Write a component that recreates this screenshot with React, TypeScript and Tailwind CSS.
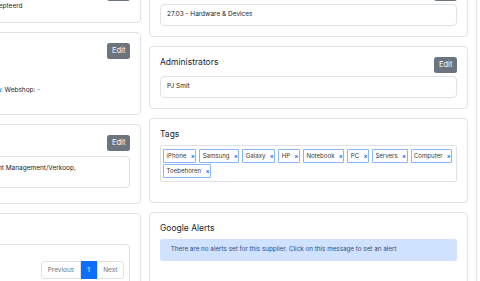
import React from "react";

const tags = ["iPhone", "Samsung", "Galaxy", "HP", "Notebook", "PC", "Servers", "Computer", "Toebehoren"];

function EditButton() {
  return (
    <button className="flex h-[16px] w-[22.7px] items-center justify-center rounded-[2.5px] bg-[#6c757d] text-[7.5px] leading-none text-white">
      Edit
    </button>
  );
}

function Card({ children, className = "" }: { children: React.ReactNode; className?: string }) {
  return (
    <div className={`rounded-[4px] border border-[#dee2e6] bg-white p-[10px] ${className}`}>{children}</div>
  );
}

function Header({ title, edit = true }: { title: string; edit?: boolean }) {
  return (
    <div className="flex h-[16px] items-start justify-between">
      <h5 className="text-[8.5px] leading-[11px] text-[#212529]">{title}</h5>
      {edit && <EditButton />}
    </div>
  );
}

function Row({ label, value, labelWidth }: { label: string; value: React.ReactNode; labelWidth: string }) {
  return (
    <div className="flex text-[6.5px] leading-[10px] text-[#212529]">
      <span className={`shrink-0 font-semibold ${labelWidth}`}>{label}</span>
      <span>{value}</span>
    </div>
  );
}

function LeftColumn() {
  return (
    <div className="flex w-[319px] shrink-0 flex-col gap-[9px]">
      <Card>
        <Header title="Status" />
        <div className="mb-[0.7px]">
          <Row label="Leveranciersstatus:" labelWidth="w-[146px]" value="Geaccepteerd" />
        </div>
      </Card>
      <Card>
        <Header title="Bestellen" />
        <div className="mt-[2.5px] flex flex-col gap-[2px] pb-[9px]">
          <Row label="Telefoon:" labelWidth="w-[149px]" value="-" />
          <Row label="E-mail:" labelWidth="w-[149px]" value="-" />
          <Row
            label="Bestelwijze:"
            labelWidth="w-[149px]"
            value={
              <>
                Media: Webshop: <span className="text-[#0d6efd]">-</span>
              </>
            }
          />
        </div>
      </Card>
      <Card>
        <Header title="Afdelingen" />
        <div className="mb-[4.7px] mt-[5px] h-[32.3px] rounded-[4px] border border-[#dee2e6] px-[6px] py-[6px] text-[6.5px] leading-[10px] text-[#212529]">
          Directie, Financiën, ICT, Marketing, Facilitair, Account Management/Verkoop,
          <br />
          Logistiek
        </div>
      </Card>
      <Card className="h-[120px]">
        <div className="text-[8.5px] leading-[11px] text-[#212529]">Documenten</div>
        <div className="mt-[9px] rounded-[4px] border border-[#dee2e6] pb-[8px] pl-[4px] pr-[5px] pt-[16px]">
          <div className="flex justify-end text-[6.5px] leading-none text-[#6c757d]">
            <span className="flex h-[18.3px] items-center rounded-l-[3px] border border-[#dee2e6] px-[5.4px]">Previous</span>
            <span className="flex h-[18.3px] w-[16px] items-center justify-center bg-[#0d6efd] text-white">1</span>
            <span className="flex h-[18.3px] items-center rounded-r-[3px] border border-[#dee2e6] px-[5.5px]">Next</span>
          </div>
        </div>
      </Card>
    </div>
  );
}

function RightColumn() {
  return (
    <div className="flex w-[319px] shrink-0 flex-col gap-[9px]">
      <Card>
        <Header title="Categorie" />
        <div className="mt-[3px] flex h-[22px] items-center rounded-[4px] border border-[#dee2e6] px-[6px] text-[6.5px] text-[#212529]">
          27.03 - Hardware &amp; Devices
        </div>
      </Card>
      <Card>
        <Header title="Administrators" />
        <div className="mt-[3px] flex h-[22px] items-center rounded-[4px] border border-[#dee2e6] px-[6px] text-[6.5px] text-[#212529]">
          PJ Smit
        </div>
      </Card>
      <Card>
        <h5 className="mb-[5px] text-[8.5px] leading-[11px] text-[#212529]">Tags</h5>
        <div className="mb-[10px] flex h-[36.7px] flex-wrap content-start gap-x-[3px] gap-y-[1.6px] rounded-[2px] border border-[#dee2e6] px-[2.3px] pt-[3.3px]">
          {tags.map((t) => (
            <span
              key={t}
              className="flex h-[13.4px] items-center rounded-[1px] border border-[#86b7fe] pl-[2.3px] pr-[1.2px] text-[6.1px] leading-none text-[#343a40]"
            >
              {t}
              <span className="ml-[4.8px] mt-[3px] flex w-[3px] justify-center overflow-visible text-[6px] font-bold leading-none text-[#0d6efd]">
                ×
              </span>
            </span>
          ))}
        </div>
      </Card>
      <Card className="h-[80px]">
        <h5 className="mb-[5px] text-[8.5px] leading-[11px] text-[#212529]">Google Alerts</h5>
        <div className="flex h-[22.7px] items-center rounded-[3px] bg-[#cfe2ff] px-[10.7px] text-[6.3px] text-[#2e4d7e]">
          There are no alerts set for this supplier. Click on this message to set an alert
        </div>
      </Card>
    </div>
  );
}

export default function App() {
  return (
    <div className="relative h-[281px] w-[480px] overflow-hidden bg-white font-['Inter','Liberation_Sans',sans-serif]">
      <div className="-mt-[26px] ml-[-178px] flex items-start gap-[8px]">
        <LeftColumn />
        <RightColumn />
        <div className="h-[340px] w-[319px] shrink-0 rounded-[4px] border border-[#dee2e6] bg-white" />
      </div>
    </div>
  );
}
